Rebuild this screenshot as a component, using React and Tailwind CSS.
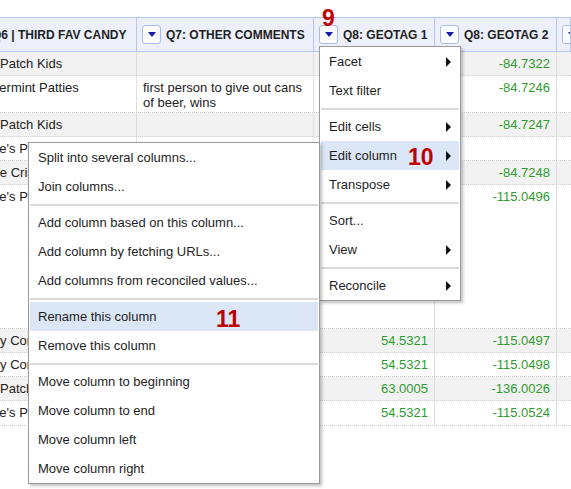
import React from "react";

const rows = [
  { h: "h-[24px]", c1: "Sour Patch Kids", c2: "", g1: "42.9634", g2: "-84.7322" },
  { h: "h-[37px]", c1: "Peppermint Patties", c2: "first person to give out cans of beer, wins", g1: "42.9633", g2: "-84.7246" },
  { h: "h-[24px]", c1: "Sour Patch Kids", c2: "", g1: "42.9635", g2: "-84.7247" },
  { h: "h-[24px]", c1: "Reese's Peanut Butter Cups", c2: "", g1: "", g2: "" },
  { h: "h-[24px]", c1: "Coffee Crisp", c2: "", g1: "42.9636", g2: "-84.7248" },
  { h: "h-[144px]", c1: "Reese's Peanut Butter Cups", c2: "", g1: "54.5322", g2: "-115.0496" },
  { h: "h-[24px]", c1: "Candy Corn", c2: "", g1: "54.5321", g2: "-115.0497" },
  { h: "h-[24px]", c1: "Candy Corn", c2: "", g1: "54.5321", g2: "-115.0498" },
  { h: "h-[24px]", c1: "Sour Patch Kids", c2: "", g1: "63.0005", g2: "-136.0026" },
  { h: "h-[25px]", c1: "Reese's Peanut Butter Cups", c2: "", g1: "54.5321", g2: "-115.0524" },
];

const cols = "grid grid-cols-[174px_177px_121px_122px_1fr]";

function DropBtn() {
  return (
    <div className="w-[19px] h-[19px] shrink-0 rounded-[3px] border border-[#a9bcef] bg-[#fbfcff] flex items-center justify-center">
      <div className="w-0 h-0 border-x-[4px] border-x-transparent border-t-[5px] border-t-[#1a1aa8]" />
    </div>
  );
}

function HeadCell({ label }) {
  return (
    <div className="flex items-center gap-[5px] pl-[5px] border-r border-[#b6c6ef] overflow-hidden whitespace-nowrap">
      <DropBtn />
      <span className="text-[12px] font-bold text-[#222]">{label}</span>
    </div>
  );
}

function Arrow() {
  return <div className="w-0 h-0 border-y-[5px] border-y-transparent border-l-[5px] border-l-[#111]" />;
}

function Item({ label, arrow, active }) {
  return (
    <div className={`h-[29px] flex items-center justify-between pl-[8px] pr-[8px] text-[13px] text-[#1e1e1e] whitespace-nowrap ${active ? "bg-[#dbe6f6]" : ""}`}>
      <span>{label}</span>
      {arrow ? <Arrow /> : null}
    </div>
  );
}

function Sep() {
  return (
    <div className="h-[7px] flex items-center">
      <div className="h-[2px] w-full bg-[#d9d9d9]" />
    </div>
  );
}

export default function App() {
  return (
    <div className="relative w-[571px] h-[489px] overflow-hidden bg-white font-['Liberation_Sans',Arial,sans-serif]">
      <div className="ml-[-37px] w-[608px] pt-[17px]">
        <div className={`${cols} h-[35px] border-y border-[#b6c6ef] bg-[#edf0fb]`}>
          <HeadCell label="Q6 | THIRD FAV CANDY" />
          <HeadCell label="Q7: OTHER COMMENTS" />
          <HeadCell label="Q8: GEOTAG 1" />
          <HeadCell label="Q8: GEOTAG 2" />
          <HeadCell label="Q9: GEOTAG 3" />
        </div>
        {rows.map((r, i) => (
          <div
            key={i}
            className={`${cols} ${r.h} border-b border-dotted border-[#cfcfcf] ${i % 2 === 0 ? "bg-[#f2f2f2]" : "bg-white"} text-[13px] leading-[15px] text-[#222]`}
          >
            <div className="pt-[4px] pl-[6px] border-r border-[#dedede] whitespace-nowrap overflow-hidden">{r.c1}</div>
            <div className="pt-[4px] px-[6px] border-r border-[#dedede]">{r.c2}</div>
            <div className="pt-[4px] pr-[6px] border-r border-[#dedede] text-right text-[#2f9b2f]">{r.g1}</div>
            <div className="pt-[4px] pr-[6px] border-r border-[#dedede] text-right text-[#2f9b2f]">{r.g2}</div>
            <div />
          </div>
        ))}
      </div>

      {/* Column dropdown menu */}
      <div className="absolute left-[319px] top-[46px] w-[142px] border border-[#9a9a9a] bg-white px-[1px] shadow-[2px_2px_3px_rgba(0,0,0,0.25)] z-10">
        <Item label="Facet" arrow />
        <Item label="Text filter" />
        <Sep />
        <Item label="Edit cells" arrow />
        <Item label="Edit column" arrow active />
        <Item label="Transpose" arrow />
        <Sep />
        <Item label="Sort..." />
        <Item label="View" arrow />
        <Sep />
        <Item label="Reconcile" arrow />
      </div>

      {/* Edit column submenu */}
      <div className="absolute left-[28px] top-[142px] w-[292px] border border-[#9a9a9a] bg-white px-[1px] shadow-[2px_2px_3px_rgba(0,0,0,0.25)] z-20">
        <Item label="Split into several columns..." />
        <Item label="Join columns..." />
        <Sep />
        <Item label="Add column based on this column..." />
        <Item label="Add column by fetching URLs..." />
        <Item label="Add columns from reconciled values..." />
        <Sep />
        <Item label="Rename this column" active />
        <Item label="Remove this column" />
        <Sep />
        <Item label="Move column to beginning" />
        <Item label="Move column to end" />
        <Item label="Move column left" />
        <Item label="Move column right" />
      </div>

      {/* Step annotations */}
      <div className="absolute left-[322px] top-[7px] text-[23px] leading-none font-bold text-[#c00000] z-30">9</div>
      <div className="absolute left-[408px] top-[146px] text-[23px] leading-none font-bold text-[#c00000] z-30">10</div>
      <div className="absolute left-[216px] top-[308px] text-[23px] leading-none font-bold text-[#c00000] z-30">11</div>
    </div>
  );
}
